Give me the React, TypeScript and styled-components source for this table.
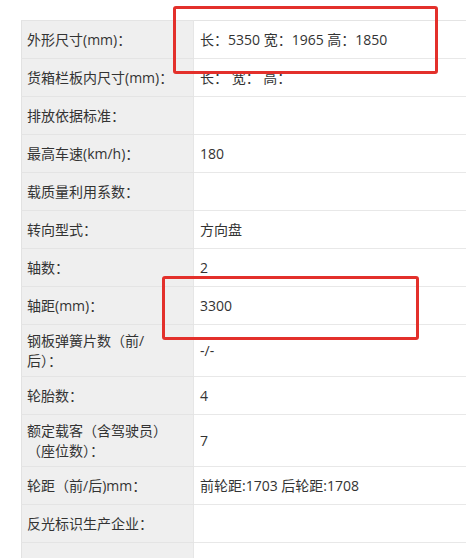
import styled, { createGlobalStyle } from 'styled-components'

const GlobalStyle = createGlobalStyle`
  html, body {
    margin: 0;
    padding: 0;
    background: #fff;
    overflow: hidden;
  }
  body {
    font-family: "Open Sans", "Noto Sans CJK SC", sans-serif;
    font-size: 14px;
    color: #333;
  }
`

const Page = styled.div`
  position: relative;
  width: 466px;
  height: 558px;
  padding: 20px 0 0 21px;
  box-sizing: border-box;
  overflow: hidden;
`

const Table = styled.table`
  border-collapse: collapse;
  width: 480px;
  table-layout: fixed;
  border-top: 1px solid #e4e4e4;
  border-left: 1px solid #e2e2e2;
`

const Row = styled.tr`
  height: 38px;
`

const Label = styled.td`
  width: 172px;
  box-sizing: border-box;
  background: #efefef;
  padding: 6px 14px 5px 5px;
  line-height: 20px;
  vertical-align: middle;
  border-bottom: 1px solid #e4e4e4;
  border-right: 1px solid #e6e6e6;
`

const Value = styled.td`
  padding: 6px 6px 5px 6px;
  line-height: 20px;
  vertical-align: middle;
  border-bottom: 1px solid #e8e8e8;
`

const Highlight = styled.div<{ $top: number; $left: number; $w: number; $h: number }>`
  position: absolute;
  top: ${p => p.$top}px;
  left: ${p => p.$left}px;
  width: ${p => p.$w}px;
  height: ${p => p.$h}px;
  box-sizing: border-box;
  border: 3px solid #e3302b;
  border-radius: 3px;
  pointer-events: none;
`

const rows: [string, string][] = [
  ['外形尺寸(mm)：', '长：5350 宽：1965 高：1850'],
  ['货箱栏板内尺寸(mm)：', '长： 宽： 高：'],
  ['排放依据标准：', ''],
  ['最高车速(km/h)：', '180'],
  ['载质量利用系数：', ''],
  ['转向型式：', '方向盘'],
  ['轴数：', '2'],
  ['轴距(mm)：', '3300'],
  ['钢板弹簧片数（前/后）：', '-/-'],
  ['轮胎数：', '4'],
  ['额定载客（含驾驶员）（座位数）：', '7'],
  ['轮距（前/后)mm：', '前轮距:1703 后轮距:1708'],
  ['反光标识生产企业：', ''],
  ['', ''],
]

const App = () => {
  return (
    <Page>
      <GlobalStyle />
      <Table>
        <tbody>
          {rows.map(([label, value], i) => (
            <Row key={i}>
              <Label>{label}</Label>
              <Value>{value}</Value>
            </Row>
          ))}
        </tbody>
      </Table>
      <Highlight $top={6} $left={173} $w={265} $h={68} />
      <Highlight $top={276} $left={162} $w={257} $h={64} />
    </Page>
  )
}

export default App
